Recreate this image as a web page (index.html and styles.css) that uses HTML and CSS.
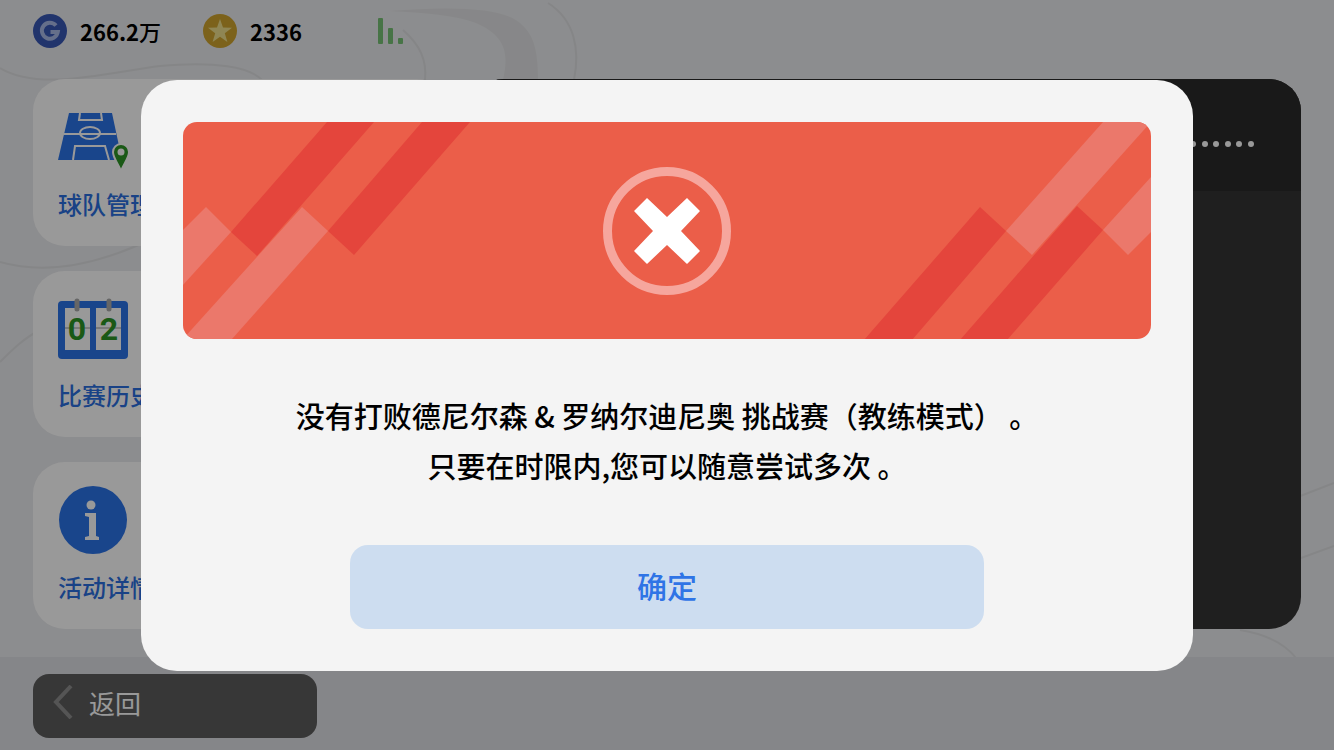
FILE: index.html
```
<!DOCTYPE html>
<html lang="zh-CN">
<head>
  <meta charset="UTF-8">
  <meta name="viewport" content="width=device-width, initial-scale=1.0">
  <title>挑战赛</title>
  <link rel="stylesheet" href="styles.css">
</head>
<body>
  <!-- 背景曲线 -->
  <svg class="backdrop" viewBox="0 0 1334 750" preserveAspectRatio="xMidYMid slice" aria-hidden="true">
    <path d="M390 11C450 6 495 8 514 19C532 30 538 45 538 80H503C510 50 503 35 476 23C455 15 425 13 390 11Z" fill="#e1e2e4"/>
    <g fill="none" stroke="#dedfe2" stroke-width="2">
      <path d="M0 68C40 92 110 72 160 66C215 61 250 67 262 80"/>
      <path d="M403 30C420 45 427 60 425 80"/>
      <path d="M548 3C575 20 580 50 574 80"/>
      <path d="M0 362C12 350 24 338 40 330"/>
      <path d="M0 262C45 275 100 265 160 235"/>
      <path d="M1290 500L1334 483"/>
      <path d="M1290 562L1334 546"/>
      <path d="M1240 630C1265 634 1285 644 1296 658"/>
    </g>
  </svg>

  <div class="page">
    <header class="topbar">
      <div class="coin">
        <svg width="34" height="34" viewBox="0 0 34 34" aria-hidden="true">
          <circle cx="17" cy="17" r="17" fill="#3857b5"/>
          <path d="M23 11.5A8 8 0 1 0 24.8 18H17.5" fill="none" stroke="#a9b9e6" stroke-width="4"/>
        </svg>
        <span>266.2<span class="unit">万</span></span>
      </div>
      <div class="coin">
        <svg width="34" height="34" viewBox="0 0 34 34" aria-hidden="true">
          <circle cx="17" cy="17" r="17" fill="#cfa42e"/>
          <path d="M17 5L20 13.6L29 13.8L21.8 19.3L24.4 28L17 22.8L9.6 28L12.2 19.3L5 13.8L14 13.6Z" fill="#efe08c"/>
        </svg>
        <span>2336</span>
      </div>
      <svg class="signal" width="26" height="26" viewBox="0 0 26 26" aria-hidden="true">
        <g fill="#77c176">
          <rect x="0" y="0" width="5" height="26" rx="1"/>
          <rect x="10" y="10" width="5" height="16" rx="1"/>
          <rect x="20" y="20" width="5" height="6" rx="1"/>
        </g>
      </svg>
    </header>

    <main class="content">
      <nav class="menu">
        <a class="card" href="#team">
          <svg width="72" height="70" viewBox="0 -7 72 70" aria-hidden="true">
            <path d="M11 3H54L64 50H0Z" fill="#2b73e8"/>
            <g fill="none" stroke="#fff" stroke-width="2">
              <path d="M22 3L21 10H44L43 3"/>
              <path d="M6 24H58"/>
              <ellipse cx="32" cy="23" rx="10" ry="6"/>
              <path d="M15 50L17 36H47L51 50"/>
            </g>
            <path d="M63 61C60 53 55 48 55 42A8 8 0 0 1 71 42C71 48 66 53 63 61Z" fill="#2c9425" stroke="#fff" stroke-width="2"/>
            <circle cx="63" cy="42" r="3.5" fill="#fff"/>
          </svg>
          <span>球队管理</span>
        </a>
        <a class="card" href="#history">
          <svg width="72" height="70" viewBox="0 -3 72 70" aria-hidden="true">
            <rect x="0" y="3" width="70" height="58" rx="4" fill="#2b73e8"/>
            <path d="M7 10H32V52H7ZM38 10H63V52H38Z" fill="#fff"/>
            <path d="M7 30H32M38 30H63" stroke="#999" stroke-width="1"/>
            <g fill="none" stroke="#aaa" stroke-width="5" stroke-linecap="round">
              <path d="M19 3V11M51 3V11"/>
            </g>
            <text class="flip" x="19" y="42">0</text>
            <text class="flip" x="51" y="42">2</text>
          </svg>
          <span>比赛历史</span>
        </a>
        <a class="card" href="#detail">
          <svg width="70" height="70" viewBox="0 0 70 70" aria-hidden="true">
            <circle cx="35" cy="34" r="34" fill="#2b73e8"/>
            <circle cx="33" cy="19" r="4.5" fill="#fff"/>
            <path d="M27 27L38 27V50L41 51V54H27V51L31 50V31L27 30Z" fill="#fff"/>
          </svg>
          <span>活动详情</span>
        </a>
      </nav>
      <section class="panel">
        <div class="panel-head">
          <svg width="76" height="8" viewBox="0 0 76 8" aria-hidden="true">
            <g fill="#fff">
              <circle cx="4" cy="4" r="3"/>
              <circle cx="15" cy="4" r="3"/>
              <circle cx="27" cy="4" r="3"/>
              <circle cx="38" cy="4" r="3"/>
              <circle cx="50" cy="4" r="3"/>
              <circle cx="61" cy="4" r="3"/>
              <circle cx="73" cy="4" r="3"/>
            </g>
          </svg>
        </div>
      </section>
    </main>

    <footer class="bottombar">
      <button class="back" type="button">
        <svg width="20" height="34" viewBox="0 0 20 34" aria-hidden="true">
          <path d="M18 1L3 17L18 33" fill="none" stroke="#8e8e8e" stroke-width="4"/>
        </svg>
        返回
      </button>
    </footer>
  </div>

  <!-- 弹窗 -->
  <div class="overlay">
    <div class="dialog" role="dialog" aria-modal="true" aria-describedby="message">
      <svg class="banner" viewBox="0 0 968 217" aria-hidden="true">
        <rect width="968" height="217" fill="#eb5e49"/>
        <g>
          <path d="M144 0H191L74 134L48 110Z" fill="#e4453c"/>
          <path d="M239 0H287L171 133L145 109Z" fill="#e4453c"/>
          <path d="M23 85L48 110L0 163V108Z" fill="#eb786b"/>
          <path d="M119 85L145 109L49 217H0Z" fill="#eb786b"/>
        </g>
        <g transform="rotate(180 484 109)">
          <path d="M144 0H191L74 134L48 110Z" fill="#e4453c"/>
          <path d="M239 0H287L171 133L145 109Z" fill="#e4453c"/>
          <path d="M23 85L48 110L0 163V108Z" fill="#eb786b"/>
          <path d="M119 85L145 109L48 218H0Z" fill="#eb786b"/>
        </g>
        <circle cx="484" cy="109" r="59.5" fill="none" stroke="#f6a69d" stroke-width="9"/>
        <path transform="translate(484 109)" d="M-33 -20L-20 -33L0 -14L20 -33L33 -20L14 0L33 20L20 33L0 14L-20 33L-33 20L-14 0Z" fill="#fff"/>
      </svg>
      <p id="message" class="message">没有打败德尼尔森 &amp; 罗纳尔迪尼奥 挑战赛（教练模式） 。<br>只要在时限内,您可以随意尝试多次 。</p>
      <button class="confirm" type="button">确定</button>
    </div>
  </div>
</body>
</html>
```
FILE: styles.css
```
* {
  box-sizing: border-box;
}

body {
  margin: 0;
  font-family: "Noto Sans CJK SC", sans-serif;
  background-color: #eaebee;
  color: #000;
}

.backdrop {
  position: absolute;
  width: 100%;
  height: 100%;
}

.page {
  position: relative;
  display: flex;
  flex-direction: column;
  min-height: 100vh;
}

/* 顶部 */
.topbar {
  display: flex;
  align-items: center;
  gap: 42px;
  padding: 14px 33px;
}

.coin {
  display: flex;
  align-items: center;
  gap: 13px;
  font-size: 22px;
  font-weight: bold;
  line-height: 34px;
}

.unit {
  font-weight: 500;
}

.signal {
  margin-left: 34px;
}

/* 主体 */
.content {
  flex: 1;
  display: flex;
  gap: 24px;
  padding: 17px 33px 28px;
}

.menu {
  flex: 1;
  display: flex;
  flex-direction: column;
  gap: 25px;
}

.card {
  flex: 1;
  display: flex;
  flex-direction: column;
  justify-content: space-between;
  padding: 24px 25px 26px;
  border-radius: 32px;
  background: #fff;
  color: #2b6fe0;
  font-size: 24px;
  font-weight: 500;
  line-height: 32px;
  text-decoration: none;
}

.flip {
  font-family: Roboto, sans-serif;
  font-size: 32px;
  font-weight: bold;
  text-anchor: middle;
  fill: #2c9425;
}

.panel {
  flex: 2;
  overflow: hidden;
  border-radius: 32px;
  background: #343434;
}

.panel-head {
  display: flex;
  justify-content: flex-end;
  padding: 61px 47px 43px;
  background: #2b2b2b;
}

/* 底部 */
.bottombar {
  padding: 17px 33px 12px;
  background: #dedfe4;
}

.back {
  display: flex;
  align-items: center;
  gap: 16px;
  width: 284px;
  height: 64px;
  padding: 0 20px 8px;
  border: none;
  border-radius: 16px;
  background: #5d5d5d;
  color: #fff;
  font-family: inherit;
  font-size: 26px;
}

/* 弹窗 */
.overlay {
  position: fixed;
  inset: 0;
  display: flex;
  justify-content: center;
  align-items: center;
  padding: 0 141px;
  background: rgba(0, 0, 0, 0.4);
}

.dialog {
  flex: 1;
  display: flex;
  flex-direction: column;
  padding: 42px;
  border-radius: 36px;
  background: #f4f4f4;
}

.banner {
  display: block;
  width: 100%;
  border-radius: 14px;
}

.message {
  margin: 51px 0 55px;
  font-size: 29px;
  font-weight: 500;
  line-height: 50px;
  text-align: center;
}

.confirm {
  height: 84px;
  margin: 0 167px;
  padding: 0 0 4px;
  border: none;
  border-radius: 18px;
  background: #cdddf0;
  color: #2f74e6;
  font-family: inherit;
  font-size: 30px;
  font-weight: 500;
}
```
